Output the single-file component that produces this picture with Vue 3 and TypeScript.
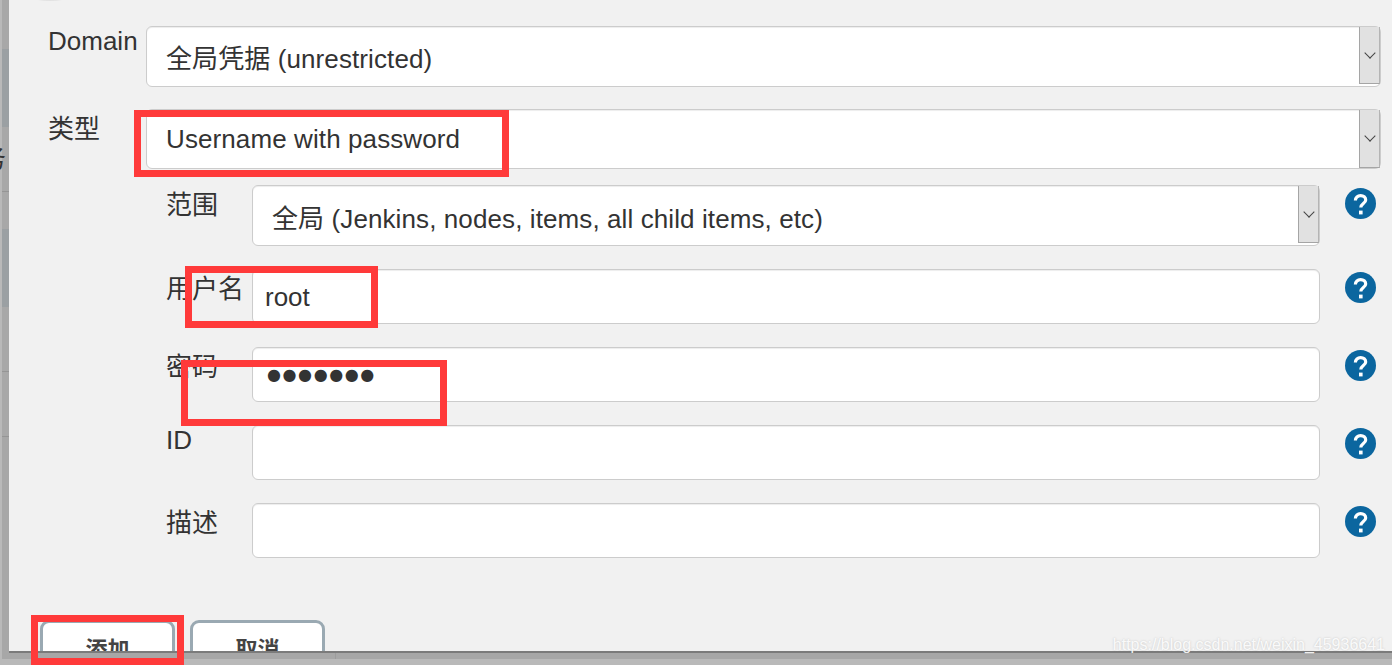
<script setup lang="ts">
interface Field {
  label: string;
  value?: string;
  secret?: boolean;
  latin?: boolean;
}

const fields: Field[] = [
  { label: '用户名', value: 'root' },
  { label: '密码', value: '●●●●●●●', secret: true },
  { label: 'ID', latin: true },
  { label: '描述' },
];

const stripe = ['plain', 'blue', 'plain', 'line', 'plain', 'blue', 'plain', 'line', 'plain', 'line', 'plain'];
</script>

<template>
  <div class="page">
    <div class="shell">
      <div class="backdrop">
        <div v-for="(s, i) in stripe" :key="i" :class="['seg', `seg-${i}`, s]"></div>
        <span class="peek">务</span>
      </div>

      <main class="dialog">
        <div class="top-shadow"></div>

        <div class="row">
          <label class="label latin">Domain</label>
          <div class="select wide">
            <span class="select-text">全局凭据 (unrestricted)</span>
            <span class="arrow"><i class="chevron"></i></span>
          </div>
        </div>

        <div class="row second">
          <label class="label">类型</label>
          <div class="select wide slim">
            <span class="select-text">Username with password</span>
            <span class="arrow"><i class="chevron"></i></span>
          </div>
        </div>

        <div class="fields">
          <div class="field">
            <label class="label">范围</label>
            <div class="select">
              <span class="select-text">全局 (Jenkins, nodes, items, all child items, etc)</span>
              <span class="arrow"><i class="chevron"></i></span>
            </div>
            <svg class="help" viewBox="0 0 31 31" aria-hidden="true">
              <circle cx="15.5" cy="15.5" r="15.5" fill="#0b669f" />
              <path d="M10.4 12.6c0-3.1 2.3-4.9 5.2-4.9 3 0 5.1 1.7 5.1 4.2 0 3.6-4.9 3.6-4.9 7.6" fill="none" stroke="#fff" stroke-width="3.2" />
              <rect x="14" y="22.6" width="3.6" height="3.8" fill="#fff" />
            </svg>
          </div>

          <div v-for="f in fields" :key="f.label" class="field">
            <label :class="['label', { latin: f.latin }]">{{ f.label }}</label>
            <div class="input" :class="{ secret: f.secret }">{{ f.value }}</div>
            <svg class="help" viewBox="0 0 31 31" aria-hidden="true">
              <circle cx="15.5" cy="15.5" r="15.5" fill="#0b669f" />
              <path d="M10.4 12.6c0-3.1 2.3-4.9 5.2-4.9 3 0 5.1 1.7 5.1 4.2 0 3.6-4.9 3.6-4.9 7.6" fill="none" stroke="#fff" stroke-width="3.2" />
              <rect x="14" y="22.6" width="3.6" height="3.8" fill="#fff" />
            </svg>
          </div>
        </div>

        <div class="actions">
          <button class="btn" type="button">添加</button>
          <button class="btn" type="button">取消</button>
        </div>
      </main>
    </div>

    <div class="seam"></div>
    <div class="mark mark-type"></div>
    <div class="mark mark-user"></div>
    <div class="mark mark-pass"></div>
    <div class="mark mark-add"></div>
    <span class="watermark">https://blog.csdn.net/weixin_45936641</span>
  </div>
</template>

<style>
html,
body {
  margin: 0;
  height: 100%;
  overflow: hidden;
}
</style>

<style scoped>
.page {
  position: relative;
  display: flex;
  width: 1392px;
  height: 665px;
  box-sizing: border-box;
  overflow: hidden;
  padding: 0 0 6px 2px;
  background: #b9b9b9;
  font-family: "Liberation Sans", "Noto Sans CJK SC", sans-serif;
  color: #333;
  font-size: 26px;
}

.shell {
  flex: 1;
  display: flex;
  align-items: flex-start;
  background: #a7a7a7;
}

.backdrop {
  position: relative;
  display: flex;
  flex-direction: column;
  width: 7px;
  flex-shrink: 0;
}

.seg.plain {
  background: #a8a8a8;
}
.seg.blue {
  background: #9ba0a3;
}
.seg.line {
  height: 1px;
  background: #959595;
}
.seg-0 { height: 49px; }
.seg-1 { height: 78px; }
.seg-2 { height: 64px; }
.seg-4 { height: 37px; }
.seg-5 { height: 78px; }
.seg-6 { height: 64px; }
.seg-8 { height: 64px; }

.peek {
  position: absolute;
  left: -22px;
  top: 144px;
  font-size: 26px;
  line-height: 30px;
  color: #333;
}

.dialog {
  position: relative;
  flex: 1;
  height: 653px;
  box-sizing: border-box;
  padding: 26px 11px 0 39px;
  overflow: hidden;
  background: #f1f1f1;
  border-bottom: 2px solid #7b7b7b;
}

.top-shadow {
  position: absolute;
  top: -9px;
  left: 21px;
  width: 40px;
  height: 10px;
  border-radius: 50%;
  background: #e2e2e2;
}

.row {
  display: flex;
  height: 61px;
}
.row.second {
  height: 60px;
  margin-top: 22px;
}
.row > .label {
  width: 98px;
}

.label {
  flex-shrink: 0;
  padding-top: 5px;
  line-height: 30px;
}
.label.latin {
  padding-top: 0;
}

.select,
.input {
  flex: 1;
  display: flex;
  align-items: center;
  box-sizing: border-box;
  min-width: 0;
  background: #fff;
  border: 1px solid #ccc;
  border-radius: 6px;
  box-shadow: inset 0 1px 1px rgba(0, 0, 0, 0.075);
}

.select {
  align-items: stretch;
}
.select-text {
  flex: 1;
  align-self: center;
  padding-left: 19px;
  letter-spacing: 0.1px;
  white-space: nowrap;
}
.arrow {
  display: flex;
  align-items: center;
  justify-content: center;
  width: 21px;
  margin-bottom: 2px;
  box-sizing: border-box;
  background: #e1e1e1;
  border-left: 1px solid #a5a5a5;
  border-right: 1px solid #b4b4b4;
  border-bottom: 1px solid #a5a5a5;
}
.slim .arrow {
  margin-bottom: 0;
}
.chevron {
  display: block;
  width: 7px;
  height: 7px;
  margin-top: -5px;
  border-right: 1px solid #444;
  border-bottom: 1px solid #444;
  transform: rotate(45deg);
}

.fields {
  display: flex;
  flex-direction: column;
  gap: 23px;
  margin-top: 16px;
  padding-left: 118px;
}
.field {
  display: flex;
  height: 55px;
}
.field:first-child {
  height: 61px;
}
.field .select-text {
  padding-top: 2px;
}
.field > .label {
  width: 86px;
}
.field > .select,
.field > .input {
  flex: none;
  width: 1068px;
}
.input {
  padding: 2px 0 0 12px;
}
.input.secret {
  align-items: flex-start;
  padding: 12px 0 0 14px;
  font-family: "DejaVu Sans", sans-serif;
  font-size: 16px;
  line-height: 30px;
  letter-spacing: 1.6px;
}

.help {
  flex-shrink: 0;
  width: 31px;
  height: 31px;
  margin: 3px 0 0 25px;
}

.actions {
  display: flex;
  gap: 15px;
  margin: 62px 0 0 -8px;
}
.btn {
  width: 135px;
  height: 70px;
  padding: 0 0 16px;
  background: #fff;
  border: 3px solid #9aa9b2;
  border-radius: 9px;
  color: #444;
  font: bold 22px "Liberation Sans", "Noto Sans CJK SC", sans-serif;
}

.seam {
  position: absolute;
  left: 335px;
  top: 653px;
  width: 1px;
  height: 6px;
  background: #9c9c9c;
}

.mark {
  position: absolute;
  box-sizing: border-box;
  border: 7px solid #ff3a3a;
}
.mark-type {
  left: 134px;
  top: 110px;
  width: 375px;
  height: 67px;
}
.mark-user {
  left: 185px;
  top: 266px;
  width: 193px;
  height: 62px;
}
.mark-pass {
  left: 181px;
  top: 360px;
  width: 266px;
  height: 66px;
}
.mark-add {
  left: 31px;
  top: 615px;
  width: 153px;
  height: 50px;
}

.watermark {
  position: absolute;
  right: 7px;
  top: 635px;
  font-size: 16px;
  line-height: 20px;
  color: rgba(255, 255, 255, 0.9);
  text-shadow: 0 0 2px rgba(140, 140, 140, 0.45);
  white-space: nowrap;
}
</style>
